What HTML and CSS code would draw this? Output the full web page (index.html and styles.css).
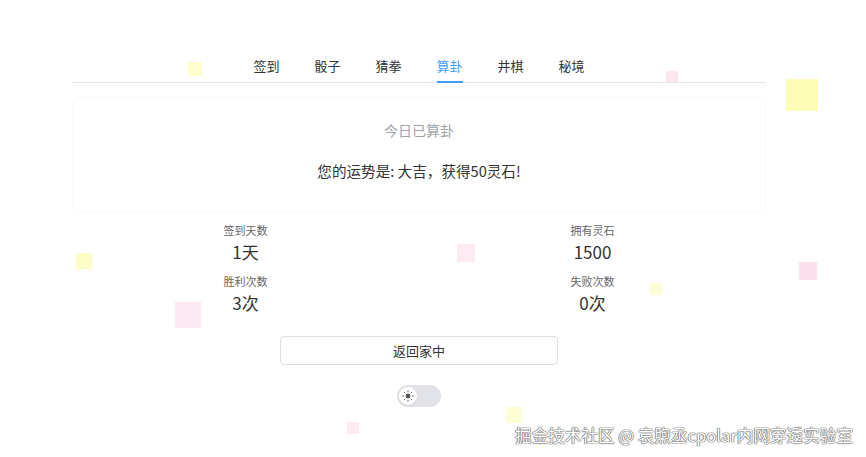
FILE: index.html
```html
<!DOCTYPE html>
<html lang="zh">
<head>
<meta charset="utf-8">
<title>算卦</title>
<link rel="stylesheet" href="styles.css">
</head>
<body>
<div class="confetti">
  <span class="sq y s1"></span>
  <span class="sq p s2"></span>
  <span class="sq y s3"></span>
  <span class="sq p s4"></span>
  <span class="sq y s5"></span>
  <span class="sq p s6"></span>
  <span class="sq y s7"></span>
  <span class="sq p s8"></span>
  <span class="sq y s9"></span>
  <span class="sq p s10"></span>
</div>
<main class="page">
  <nav class="tabs">
    <a class="tab">签到</a>
    <a class="tab">骰子</a>
    <a class="tab">猜拳</a>
    <a class="tab active">算卦</a>
    <a class="tab">井棋</a>
    <a class="tab">秘境</a>
  </nav>
  <section class="card">
    <p class="status">今日已算卦</p>
    <p class="message">您的运势是: 大吉，获得50灵石!</p>
  </section>
  <section class="stats">
    <div class="stat"><div class="label">签到天数</div><div class="value">1天</div></div>
    <div class="stat"><div class="label">拥有灵石</div><div class="value">1500</div></div>
    <div class="stat"><div class="label">胜利次数</div><div class="value">3次</div></div>
    <div class="stat"><div class="label">失败次数</div><div class="value">0次</div></div>
  </section>
  <div class="actions">
    <button class="home-btn">返回家中</button>
  </div>
  <div class="toggle-row">
    <div class="toggle">
      <span class="knob">
        <svg width="12" height="12" viewBox="0 0 12 12">
          <circle cx="6" cy="6" r="2.4" fill="#555"/>
          <g stroke="#666" stroke-width="1" stroke-linecap="round">
            <line x1="6" y1="0.8" x2="6" y2="1.8"/>
            <line x1="6" y1="10.2" x2="6" y2="11.2"/>
            <line x1="0.8" y1="6" x2="1.8" y2="6"/>
            <line x1="10.2" y1="6" x2="11.2" y2="6"/>
            <line x1="2.3" y1="2.3" x2="3" y2="3"/>
            <line x1="9" y1="9" x2="9.7" y2="9.7"/>
            <line x1="2.3" y1="9.7" x2="3" y2="9"/>
            <line x1="9" y1="3" x2="9.7" y2="2.3"/>
          </g>
        </svg>
      </span>
    </div>
  </div>
</main>
<div class="watermark">掘金技术社区 @ 袁煦丞cpolar内网穿透实验室</div>
</body>
</html>
```

FILE: styles.css
```css
html, body {
  margin: 0;
  padding: 0;
  background: #ffffff;
}
body {
  font-family: "Noto Sans CJK SC", "Noto Sans", sans-serif;
  color: #333;
  width: 866px;
  height: 457px;
  overflow: hidden;
  position: relative;
}
.page {
  width: 694px;
  margin-left: 72px;
  padding-top: 55px;
  position: relative;
  z-index: 1;
}
.tabs {
  display: flex;
  justify-content: center;
  gap: 35px;
  border-bottom: 1px solid #e6e6e6;
  height: 27px;
}
.tab {
  font-size: 13px;
  line-height: 22px;
  color: #333;
  position: relative;
  height: 27px;
  box-sizing: border-box;
  cursor: pointer;
}
.tab.active {
  color: #409eff;
}
.tab.active::after {
  content: "";
  position: absolute;
  left: 0;
  right: 0;
  bottom: -1px;
  height: 2px;
  background: #409eff;
}
.card {
  margin-top: 14px;
  height: 115px;
  box-sizing: border-box;
  border: 1px solid #fafafa;
  border-radius: 6px;
  padding-top: 22px;
  text-align: center;
}
.card p {
  margin: 0;
  font-size: 14px;
  line-height: 20px;
}
.status {
  color: #a0a4aa;
}
.message {
  margin-top: 21px !important;
  color: #333;
  font-size: 14.6px !important;
}
.stats {
  margin-top: 10px;
  display: grid;
  grid-template-columns: 1fr 1fr;
  row-gap: 7px;
  text-align: center;
}
.label {
  font-size: 11px;
  line-height: 16px;
  color: #666;
}
.value {
  font-size: 17px;
  line-height: 28px;
  color: #333;
}
.actions {
  display: flex;
  justify-content: center;
  margin-top: 19px;
}
.home-btn {
  width: 278px;
  height: 29px;
  border: 1px solid #dcdfe6;
  border-radius: 4px;
  background: #fff;
  font-family: inherit;
  font-size: 13px;
  color: #333;
  padding: 0;
}
.toggle-row {
  display: flex;
  justify-content: center;
  margin-top: 20px;
}
.toggle {
  width: 44px;
  height: 22px;
  border-radius: 11px;
  background: #e2e3e8;
  display: flex;
  align-items: center;
  padding-left: 2px;
  box-sizing: border-box;
}
.knob {
  width: 18px;
  height: 18px;
  border-radius: 50%;
  background: #fff;
  display: flex;
  align-items: center;
  justify-content: center;
  box-shadow: 0 1px 2px rgba(0,0,0,0.08);
}
.confetti {
  position: absolute;
  inset: 0;
  pointer-events: none;
}
.sq {
  position: absolute;
  display: block;
  filter: blur(0.6px);
}
.sq.y { background: rgba(252, 252, 160, 0.75); }
.sq.p { background: rgba(252, 210, 228, 0.7); }
.s1 { left: 188px; top: 62px; width: 14px; height: 14px; opacity: 0.7; }
.s2 { left: 666px; top: 71px; width: 12px; height: 12px; opacity: 0.8; }
.s3 { left: 786px; top: 79px; width: 32px; height: 32px; }
.s4 { left: 457px; top: 244px; width: 18px; height: 18px; opacity: 0.6; }
.s5 { left: 76px; top: 253px; width: 16px; height: 16px; opacity: 0.8; }
.s6 { left: 799px; top: 262px; width: 18px; height: 18px; }
.s7 { left: 650px; top: 283px; width: 12px; height: 12px; opacity: 0.6; }
.s8 { left: 175px; top: 302px; width: 26px; height: 26px; opacity: 0.7; }
.s9 { left: 506px; top: 407px; width: 16px; height: 16px; opacity: 0.6; }
.s10 { left: 347px; top: 422px; width: 12px; height: 12px; opacity: 0.6; }
.watermark {
  position: absolute;
  right: 13px;
  top: 424px;
  font-size: 16.6px;
  line-height: 22px;
  color: #ffffff;
  text-shadow: 0 0 1px #666, 0 0 1px #666, 0 0 1px #666, 0 0 1px #666;
  z-index: 2;
  white-space: nowrap;
}
```
